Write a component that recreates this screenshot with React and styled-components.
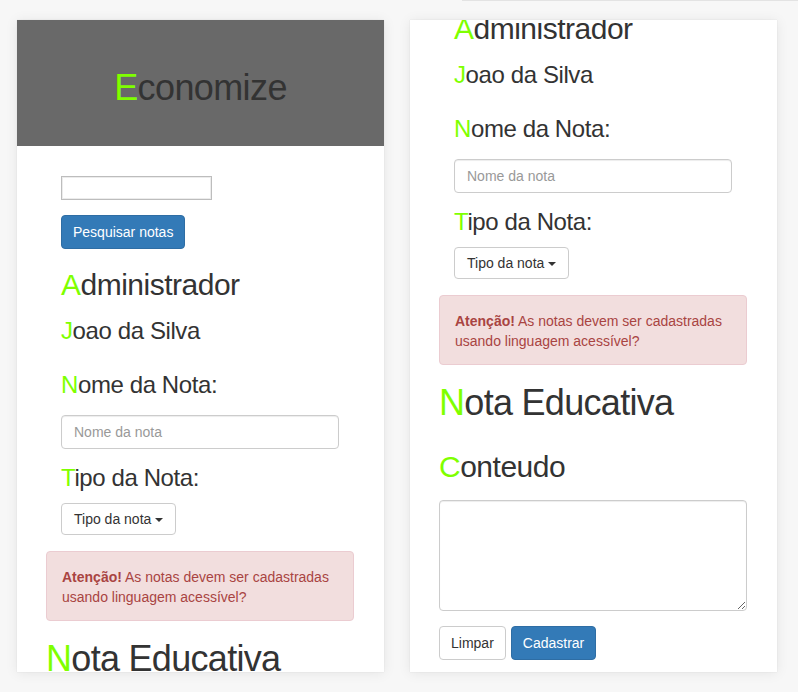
import React, { useLayoutEffect, useRef } from 'react';
import styled, { createGlobalStyle } from 'styled-components';

const GlobalStyle = createGlobalStyle`
  html, body {
    margin: 0;
    padding: 0;
    background: #f7f7f7;
    font-family: "Liberation Sans", Arial, sans-serif;
    color: #333;
  }
  * { box-sizing: border-box; }
`;

const Screen = ({ scroll = 0 }) => {
  const ref = useRef(null);

  useLayoutEffect(() => {
    if (ref.current) ref.current.scrollTop = scroll;
  }, [scroll]);

  return (
    <Phone ref={ref}>
      <Header>
        <Brand><Initial>E</Initial>conomize</Brand>
      </Header>
      <Body>
        <Group>
          <SearchInput type="text" />
          <PrimaryButton $mt={15}>Pesquisar notas</PrimaryButton>
          <Title $mt={19}><Initial>A</Initial>dministrador</Title>
          <UserName><Initial>J</Initial>oao da Silva</UserName>
          <FieldLabel $mt={28}><Initial>N</Initial>ome da Nota:</FieldLabel>
          <TextInput placeholder="Nome da nota" />
          <FieldLabel $mt={16}><Initial>T</Initial>ipo da Nota:</FieldLabel>
          <Dropdown>
            Tipo da nota <Caret />
          </Dropdown>
        </Group>
        <Alert>
          <strong>Atenção!</strong> As notas devem ser cadastradas usando linguagem acessível?
        </Alert>
        <BigTitle><Initial>N</Initial>ota Educativa</BigTitle>
        <Title $mt={27}><Initial>C</Initial>onteudo</Title>
        <ContentArea />
        <Actions>
          <DefaultButton>Limpar</DefaultButton>
          <PrimaryButton>Cadastrar</PrimaryButton>
        </Actions>
      </Body>
    </Phone>
  );
};

const App = () => (
  <>
    <GlobalStyle />
    <Page>
      <TopRule />
      <Screens>
        <Screen />
        <Screen scroll={256} />
      </Screens>
    </Page>
  </>
);

const Page = styled.div`
  width: 798px;
  height: 692px;
  overflow: hidden;
`;

const TopRule = styled.div`
  height: 1px;
  margin-left: 462px;
  background: #e3e3e3;
`;

const Screens = styled.div`
  display: flex;
  gap: 26px;
  padding: 19px 0 0 17px;
`;

const Phone = styled.div`
  width: 367px;
  height: 652px;
  overflow: hidden;
  background: #fff;
  box-shadow: 0 0 1px rgba(0, 0, 0, 0.12), 0 1px 12px rgba(0, 0, 0, 0.08);
`;

const Header = styled.div`
  height: 126px;
  background: #696969;
  padding-top: 48px;
  text-align: center;
`;

const Initial = styled.span`
  color: #7fff00;
`;

const Brand = styled.h1`
  margin: 0;
  font-size: 36px;
  line-height: 39.6px;
  font-weight: 400;
  letter-spacing: -0.6px;
  color: #333;
`;

const Body = styled.div`
  padding: 0 30px 13px 29px;
`;

const Group = styled.div`
  padding: 0 15px;
  display: flex;
  flex-direction: column;
  align-items: flex-start;
`;

const SearchInput = styled.input`
  margin-top: 30px;
  width: 151px;
  height: 24px;
  border: 1px solid #bdbdbd;
  box-shadow: inset 0 0 0 1px #ececec;
  padding: 1px 2px;
  font: 13px "Liberation Sans", Arial, sans-serif;
  outline: none;
`;

const ButtonBase = styled.button`
  display: inline-block;
  height: 34px;
  padding: 6px 11px;
  font: 14px/20px "Liberation Sans", Arial, sans-serif;
  border-radius: 4px;
  border: 1px solid transparent;
  cursor: pointer;
  white-space: nowrap;
`;

const PrimaryButton = styled(ButtonBase)`
  margin-top: ${p => p.$mt || 0}px;
  color: #fff;
  background: #337ab7;
  border-color: #2e6da4;
`;

const DefaultButton = styled(ButtonBase)`
  color: #333;
  background: #fff;
  border-color: #ccc;
`;

const Title = styled.h2`
  margin: ${p => p.$mt}px 0 0;
  font-size: 30px;
  line-height: 33px;
  font-weight: 400;
  letter-spacing: -0.5px;
`;

const UserName = styled.h3`
  margin: 17px 0 0;
  font-size: 24px;
  line-height: 26.4px;
  font-weight: 400;
  letter-spacing: -0.4px;
`;

const FieldLabel = styled.label`
  display: block;
  margin-top: ${p => p.$mt}px;
  font-size: 24px;
  line-height: 26.4px;
  letter-spacing: -0.4px;
`;

const TextInput = styled.input`
  margin-top: 16px;
  width: 278px;
  height: 34px;
  padding: 6px 12px;
  font: 14px/20px "Liberation Sans", Arial, sans-serif;
  color: #555;
  border: 1px solid #ccc;
  border-radius: 4px;
  box-shadow: inset 0 1px 1px rgba(0, 0, 0, 0.075);
  outline: none;
  &::placeholder { color: #999; }
`;

const Dropdown = styled(DefaultButton)`
  margin-top: 12px;
  height: 32px;
  padding: 5px 12px;
  display: flex;
  align-items: center;
  gap: 4px;
`;

const Caret = styled.span`
  display: inline-block;
  width: 0;
  height: 0;
  margin-top: 2px;
  border-top: 4px solid #333;
  border-left: 4px solid transparent;
  border-right: 4px solid transparent;
`;

const Alert = styled.div`
  margin-top: 16px;
  height: 70px;
  padding: 15px;
  font-size: 14px;
  line-height: 20px;
  color: #a94442;
  background: #f2dede;
  border: 1px solid #ebccd1;
  border-radius: 4px;
`;

const BigTitle = styled.h1`
  margin: 18px 0 0;
  font-size: 36px;
  line-height: 39.6px;
  font-weight: 400;
  letter-spacing: -0.7px;
`;

const ContentArea = styled.textarea`
  display: block;
  margin-top: 17px;
  width: 308px;
  height: 111px;
  padding: 6px 12px;
  font: 14px/20px "Liberation Sans", Arial, sans-serif;
  border: 1px solid #ccc;
  border-radius: 4px;
  box-shadow: inset 0 1px 1px rgba(0, 0, 0, 0.075);
  outline: none;
`;

const Actions = styled.div`
  display: flex;
  gap: 5px;
  margin-top: 15px;
`;

export default App;
